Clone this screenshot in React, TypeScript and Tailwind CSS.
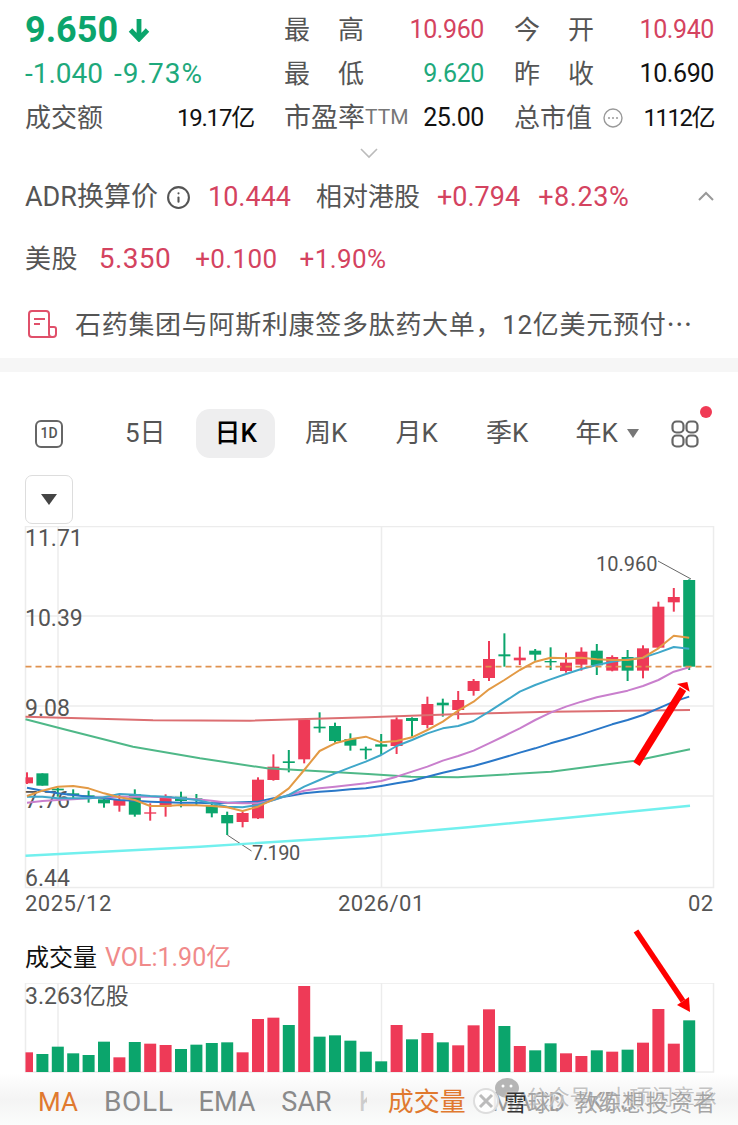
import React from 'react'
import { Info } from 'lucide-react'

const RED = '#ee3a57'
const GREEN = '#0ba56c'

const xi = (i: number) => 27 + 15.4 * i
const zy = (z: number) => 520 + z / 3

// [top of body, bottom of body, top of wick, bottom of wick], numbers read off the 3x crops
const candles: [string, number, number, number, number][] = [
    ['r', 772, 790, 757, 792], ['g', 760, 797, 760, 797], ['g', 806, 811, 803, 830], ['g', 820, 826, 808, 835],
    ['g', 826, 830, 812, 848], ['g', 838, 850, 830, 863], ['r', 840, 857, 825, 875], ['g', 822, 884, 808, 890],
    ['r', 877, 881, 850, 902], ['r', 828, 860, 823, 890], ['g', 830, 843, 815, 862], ['g', 835, 840, 822, 855],
    ['g', 855, 880, 845, 892], ['g', 885, 910, 875, 945], ['r', 879, 906, 875, 922], ['r', 779, 895, 772, 897],
    ['r', 740, 780, 703, 782], ['g', 724, 729, 690, 757], ['r', 600, 718, 598, 730], ['g', 620, 625, 577, 638],
    ['g', 618, 663, 608, 668], ['g', 657, 677, 640, 692], ['g', 686, 691, 680, 718], ['g', 673, 680, 642, 705],
    ['r', 598, 678, 592, 702], ['g', 594, 603, 592, 650], ['r', 552, 615, 530, 625], ['g', 548, 556, 536, 590],
    ['r', 540, 570, 513, 598], ['r', 483, 513, 477, 527], ['r', 417, 474, 363, 483], ['g', 403, 409, 340, 440],
    ['r', 413, 421, 380, 435], ['g', 392, 404, 387, 422], ['g', 423, 427, 382, 450], ['r', 428, 453, 398, 458],
    ['r', 395, 434, 382, 452], ['g', 392, 436, 372, 465], ['r', 411, 452, 406, 454], ['g', 411, 452, 390, 483],
    ['r', 385, 452, 376, 475], ['r', 260, 383, 245, 385], ['r', 231, 247, 204, 275], ['g', 180, 440, 178, 450],
]

const ma5 = [828, 812, 800, 798, 805, 820, 832, 840, 858, 858, 855, 856, 858, 862, 873, 860, 838, 805, 750, 693, 670, 658, 650, 667, 663, 652, 630, 605, 572, 545, 508, 480, 450, 425, 413, 415, 413, 418, 420, 420, 413, 385, 347, 353]
const ma10 = [830, 830, 835, 835, 835, 832, 822, 824, 828, 830, 835, 840, 850, 860, 862, 855, 840, 825, 800, 780, 760, 742, 725, 705, 678, 660, 640, 625, 618, 603, 575, 545, 515, 495, 478, 462, 447, 435, 425, 418, 413, 398, 381, 386]
const ma20 = [848, 843, 840, 838, 835, 832, 830, 830, 830, 832, 835, 838, 842, 848, 850, 850, 840, 825, 812, 805, 800, 795, 790, 783, 770, 755, 740, 722, 708, 692, 670, 648, 625, 600, 578, 560, 545, 532, 522, 512, 498, 480, 455, 442]
const ma30 = [803, 812, 820, 825, 830, 835, 840, 842, 845, 847, 848, 848, 850, 848, 847, 845, 835, 828, 820, 815, 812, 808, 805, 798, 790, 782, 770, 758, 748, 738, 725, 712, 698, 685, 670, 657, 643, 628, 613, 600, 585, 565, 545, 530]

const series = (values: number[]) => values.map((v, i) => `${xi(i)},${zy(v)}`).join(' ')

// these are straight-ish, so just a few points, page x and crop y
const redLine = '25.5,716.7 153,720.3 250,720.7 368,717.3 461,714 551,711.7 690,710'
const greenLine = '25.5,719.3 67,730 133,746.7 200,758.3 267,768.3 368,774 411,776.7 458,777.3 551,771.7 635,760.7 690,749.3'
const cyanLine = '25.5,855.7 200,846.7 368,836 468,827.3 568,817.7 690,805.7'

const volumes: [string, number][] = [
    ['r', 382], ['g', 387], ['g', 365], ['g', 385], ['g', 390], ['g', 350], ['r', 397], ['g', 351], ['r', 356], ['r', 360], ['g', 372],
    ['g', 359], ['g', 354], ['g', 352], ['r', 382], ['r', 282], ['r', 278], ['g', 300], ['r', 183], ['g', 335], ['g', 331], ['g', 347],
    ['g', 380], ['g', 409], ['r', 300], ['g', 343], ['r', 324], ['g', 352], ['r', 361], ['r', 301], ['r', 253], ['g', 303], ['r', 363],
    ['g', 376], ['g', 355], ['r', 385], ['r', 393], ['g', 376], ['r', 380], ['g', 374], ['r', 353], ['r', 252], ['r', 356], ['g', 286],
]

const StatCell = ({ label, value, color }: { label: React.ReactNode; value: string; color: string }) => (
    <div className="flex items-center justify-between w-[200px]">
        {label}
        <span className={`text-[25px] tracking-[-0.4px] ${color}`}>{value}</span>
    </div>
)

const Spread = ({ a, b }: { a: string; b: string }) => (
    <span className="flex justify-between w-[80px] text-[#555]">
        <span>{a}</span>
        <span>{b}</span>
    </span>
)

const Chart = () => (
    <svg viewBox="0 526 738 392" className="block w-[738px] h-[392px]">
        <rect x="25.5" y="526.5" width="688" height="361" fill="none" stroke="#ececec" strokeWidth="1.5" />
        {[616, 706, 796].map((y) => (
            <line key={y} x1="25.5" x2="713.5" y1={y} y2={y} stroke="#ececec" strokeWidth="1.5" />
        ))}
        {[58, 381.5].map((x) => (
            <line key={x} x1={x} x2={x} y1="526" y2="887" stroke="#ececec" strokeWidth="1.5" />
        ))}

        <g fill="#555" fontSize="23">
            <text x="25" y="546">11.71</text>
            <text x="25" y="626">10.39</text>
            <text x="25" y="716">9.08</text>
            <text x="25" y="808">7.76</text>
            <text x="25" y="886">6.44</text>
            <text x="25" y="911" fontSize="22" letterSpacing="0.5">2025/12</text>
            <text x="338" y="911" fontSize="22" letterSpacing="0.5">2026/01</text>
            <text x="688" y="911" fontSize="22" letterSpacing="0.5">02</text>
            <text x="252" y="860" fontSize="20" letterSpacing="-0.5">7.190</text>
            <text x="596" y="571" fontSize="20">10.960</text>
        </g>

        <polyline points="227.3,835 251.5,851" fill="none" stroke="#666" strokeWidth="1" />
        <polyline points="658,561 691,579" fill="none" stroke="#666" strokeWidth="1" />

        {candles.map(([c, top, bottom, wickTop, wickBottom], i) => {
            const fill = c === 'r' ? RED : GREEN
            const left = Math.max(xi(i) - 6, 25.5)
            return (
                <g key={i} fill={fill}>
                    <rect x={xi(i) - 1} y={zy(wickTop)} width="2" height={zy(wickBottom) - zy(wickTop)} />
                    <rect x={left} y={zy(top)} width={xi(i) + 6 - left} height={zy(bottom) - zy(top)} />
                </g>
            )
        })}

        <g fill="none" strokeWidth="2" strokeLinejoin="round">
            <polyline points={cyanLine} stroke="#72f0ee" strokeWidth="2.4" />
            <polyline points={greenLine} stroke="#4fb888" />
            <polyline points={redLine} stroke="#dc6f72" />
            <polyline points={series(ma30)} stroke="#2a78c8" />
            <polyline points={series(ma20)} stroke="#c97fcd" />
            <polyline points={series(ma10)} stroke="#3fa7c9" />
            <polyline points={series(ma5)} stroke="#e39a45" />
        </g>

        <line x1="25.5" x2="713.5" y1="666.7" y2="666.7" stroke="#e0924f" strokeWidth="1.8" strokeDasharray="6 4" />

        <line x1="636.5" y1="764" x2="683" y2="689" stroke="#ff0000" strokeWidth="7.5" />
        <polygon points="677,684 689.7,691.7 687.3,682" fill="#ff0000" />
    </svg>
)

const VolumeBars = () => (
    <svg viewBox="0 983 738 90" className="block w-[738px] h-[90px]">
        <rect x="25.5" y="983" width="688" height="89" fill="none" stroke="#ececec" strokeWidth="1.5" />
        {[58, 381.5].map((x) => (
            <line key={x} x1={x} x2={x} y1="983" y2="1072" stroke="#ececec" strokeWidth="1.5" />
        ))}
        <text x="25" y="1004" fill="#555" fontSize="23">3.263亿股</text>
        {volumes.map(([c, top], i) => {
            const y = 925 + top / 3
            const left = Math.max(xi(i) - 6, 25.5)
            return <rect key={i} x={left} y={y} width={xi(i) + 6 - left} height={1072 - y} fill={c === 'r' ? RED : GREEN} />
        })}
    </svg>
)

export default function App() {
    return (
        <div className="relative w-[738px] h-[1125px] overflow-hidden bg-white text-[26px] font-['Roboto','Noto_Sans_CJK_SC',sans-serif]">
            <section className="h-[358px] pt-2">
                <div className="grid grid-cols-[229px_200px_200px] gap-x-[30px] pl-[25px] auto-rows-[44px] items-center">
                    <div className="flex items-center gap-[10px]">
                        <span className="text-[36px] font-bold text-[#0ba56c]">9.650</span>
                        <svg width="22" height="24" viewBox="0 0 22 24" fill="none" stroke="#0ba56c" strokeWidth="4.8">
                            <path d="M11 1v20M2.5 12l8.500 9 8.500-9" />
                        </svg>
                    </div>
                    <StatCell label={<Spread a="最" b="高" />} value="10.960" color="text-[#d4435f]" />
                    <StatCell label={<Spread a="今" b="开" />} value="10.940" color="text-[#d4435f]" />

                    <div className="text-[#1ea97c] text-[28px] flex gap-[11px]">
                        <span>-1.040</span>
                        <span className="tracking-[1px]">-9.73%</span>
                    </div>
                    <StatCell label={<Spread a="最" b="低" />} value="9.620" color="text-[#1ea97c]" />
                    <StatCell label={<Spread a="昨" b="收" />} value="10.690" color="text-[#111]" />

                    <div className="flex items-center justify-between">
                        <span className="text-[#555]">成交额</span>
                        <span className="text-[#111] text-[24px] tracking-[-1.2px]">19.17亿</span>
                    </div>
                    <StatCell
                        label={
                            <span className="flex items-center text-[#555] text-[27px]">
                                市盈率<span className="text-[21px] text-[#777]">TTM</span>
                            </span>
                        }
                        value="25.00"
                        color="text-[#111]"
                    />
                    <div className="flex items-center justify-between w-[200px]">
                        <span className="flex items-center gap-[11px] text-[#555]">
                            总市值
                            <svg width="20" height="20" viewBox="0 0 20 20" fill="none">
                                <circle cx="10" cy="10" r="9" stroke="#999" strokeWidth="1.4" />
                                <circle cx="6" cy="10" r="1" fill="#999" />
                                <circle cx="10" cy="10" r="1" fill="#999" />
                                <circle cx="14" cy="10" r="1" fill="#999" />
                            </svg>
                        </span>
                        <span className="text-[#111] text-[24px] tracking-[-1.5px]">1112亿</span>
                    </div>
                </div>

                <div className="flex justify-center h-[35px] pt-[7px]">
                    <svg width="18" height="12" viewBox="0 0 18 12" fill="none" stroke="#bbb" strokeWidth="1.6">
                        <path d="M1 2l8 8 8-8" />
                    </svg>
                </div>

                <div className="relative flex items-center h-[44px] pl-[25px] text-[27px] text-[#d4435f]">
                    <span className="text-[#555]">ADR换算价</span>
                    <Info size={25} strokeWidth={2} color="#555" className="ml-[8px]" />
                    <span className="ml-[17px]">10.444</span>
                    <span className="ml-[25px] text-[26px] text-[#555]">相对港股</span>
                    <span className="ml-[17px]">+0.794</span>
                    <span className="ml-[18px] tracking-[0.6px]">+8.23%</span>
                    <svg width="16" height="10" viewBox="0 0 16 10" fill="none" stroke="#999" strokeWidth="2" className="absolute left-[698px] top-[16px]">
                        <path d="M1 9l7-7 7 7" />
                    </svg>
                </div>

                <div className="flex items-center h-[44px] mt-[18px] pl-[25px] text-[#d4435f] tracking-[0.4px]">
                    <span className="text-[#555]">美股</span>
                    <span className="ml-[21px] text-[28px]">5.350</span>
                    <span className="ml-[24px]">+0.100</span>
                    <span className="ml-[22px]">+1.90%</span>
                </div>

                <div className="flex items-center h-[44px] mt-[22px] pl-[28px]">
                    <svg width="29" height="28" viewBox="0 0 29 28" fill="none" stroke="#e0506a" strokeWidth="2" className="-mt-[3px]">
                        <path d="M24 27H4a3 3 0 0 1-3-3V4a3 3 0 0 1 3-3h14a3 3 0 0 1 3 3v20a3 3 0 0 0 3 3h1a3 3 0 0 0 3-3v-5a2 2 0 0 0-2-2h-6" />
                        <path d="M6 9h11M6 14h6" />
                    </svg>
                    <span className="ml-[18px] text-[#555] tracking-[0.7px] whitespace-nowrap">石药集团与阿斯利康签多肽药大单，12亿美元预付⋯</span>
                </div>
            </section>

            <div className="h-[14px] bg-[#f6f6f6]" />

            <section className="relative h-[154px] pt-[37px]">
                <div className="flex items-center h-[49px]">
                    <div className="w-[100px] pl-[35px]">
                        <div className="flex items-center justify-center w-[28px] h-[28px] border-2 border-[#666] rounded-[6px] text-[14px] font-medium text-[#555]">1D</div>
                    </div>
                    <div className="w-[90.5px] text-center text-[#555]">5日</div>
                    <div className="w-[90.5px] flex justify-center">
                        <div className="flex items-center justify-center w-[79px] h-[49px] rounded-[14px] bg-[#eeeeef] font-medium text-black">日K</div>
                    </div>
                    <div className="w-[90.5px] text-center text-[#555]">周K</div>
                    <div className="w-[90.5px] text-center text-[#555]">月K</div>
                    <div className="w-[90.5px] text-center text-[#555]">季K</div>
                    <div className="w-[90.5px] flex items-center pl-[23px] text-[#555]">
                        年K
                        <svg width="12" height="9" viewBox="0 0 12 9" className="ml-[9px]">
                            <path d="M0 0h12L6 9z" fill="#777" />
                        </svg>
                    </div>
                    <svg width="28" height="28" viewBox="0 0 28 28" fill="none" stroke="#666" strokeWidth="2.2" className="ml-[28px]">
                        <rect x="1.500" y="1.500" width="11" height="11" rx="4" />
                        <rect x="15.500" y="1.500" width="11" height="11" rx="4" />
                        <rect x="1.500" y="15.500" width="11" height="11" rx="4" />
                        <rect x="15.500" y="15.500" width="11" height="11" rx="4" />
                    </svg>
                </div>
                <span className="absolute left-[700px] top-[34px] w-[12px] h-[12px] rounded-full bg-[#f03a55]" />

                <div className="flex items-center justify-center w-[48px] h-[49px] ml-[25px] mt-[17px] border border-[#ddd] rounded-[7px]">
                    <svg width="16" height="11" viewBox="0 0 16 11">
                        <path d="M0 0h16L8 11z" fill="#444" />
                    </svg>
                </div>
            </section>

            <Chart />

            <section className="relative">
                <div className="flex items-center gap-2 h-[65px] pt-[15px] pl-[25px] text-[24px]">
                    <span className="text-[#111]">成交量</span>
                    <span className="text-[25px] text-[#f08a8a]">VOL:1.90亿</span>
                </div>
                <VolumeBars />
                <svg viewBox="0 918 738 154" className="absolute left-0 top-0 w-[738px] h-[154px]">
                    <line x1="636" y1="931" x2="683" y2="1001" stroke="#ff0000" strokeWidth="5.500" />
                    <polygon points="690,1012 677,1005 689,997" fill="#ff0000" />
                </svg>
            </section>

            <nav className="relative h-[53px] bg-gradient-to-b from-white via-[#f4f4f4] to-[#fbfdfc] text-[#8a8a8a]">
                <div className="flex items-center h-[58px] whitespace-nowrap text-[27px]">
                    <span className="ml-[38px] text-[26px] text-[#e0792f]">MA</span>
                    <span className="ml-[26px] text-[28px] tracking-[0.7px]">BOLL</span>
                    <span className="ml-[25px]">EMA</span>
                    <span className="ml-[26px]">SAR</span>
                    <span className="ml-[27px] w-[8px] overflow-hidden text-[#ccc]">K</span>
                    <span className="ml-[21px] text-[26px] text-[#e0792f]">成交量</span>
                    <span className="ml-[26px] text-[26px] text-[#999]">MACD</span>
                    <span className="ml-[22px] text-[26px] text-[#999]">KDJ</span>
                </div>

                {/* watermark sits over the tabs */}
                <svg width="28" height="28" viewBox="0 0 28 28" fill="none" className="absolute left-[472px] top-[14px]">
                    <circle cx="14" cy="14" r="12" fill="#ffffffcc" stroke="#ddd" strokeWidth="2" />
                    <path d="M8 8l12 12M20 8L8 20" stroke="#bbb" strokeWidth="3" />
                </svg>
                <svg width="28" height="24" viewBox="0 0 28 24" className="absolute left-[494px] top-[4px]">
                    <ellipse cx="13" cy="11" rx="12" ry="10" fill="#b5b5b5" />
                    <circle cx="9" cy="9" r="1.5" fill="#fff" />
                    <circle cx="17" cy="9" r="1.5" fill="#fff" />
                </svg>
                <span className="absolute left-[526px] top-[8px] text-[22px] tracking-[-0.2px] text-[#aaa]/70 whitespace-nowrap [text-shadow:0_0_2px_#fff]">公众号 · 小项闲章承</span>
                <span className="absolute left-[504px] top-[14px] text-[23px] tracking-[0.6px] text-[#888]/75 whitespace-nowrap [text-shadow:0_0_2px_#fff]">
                    <span className="text-[#333]">雪</span>球：教练想投资者
                </span>
            </nav>
        </div>
    )
}
